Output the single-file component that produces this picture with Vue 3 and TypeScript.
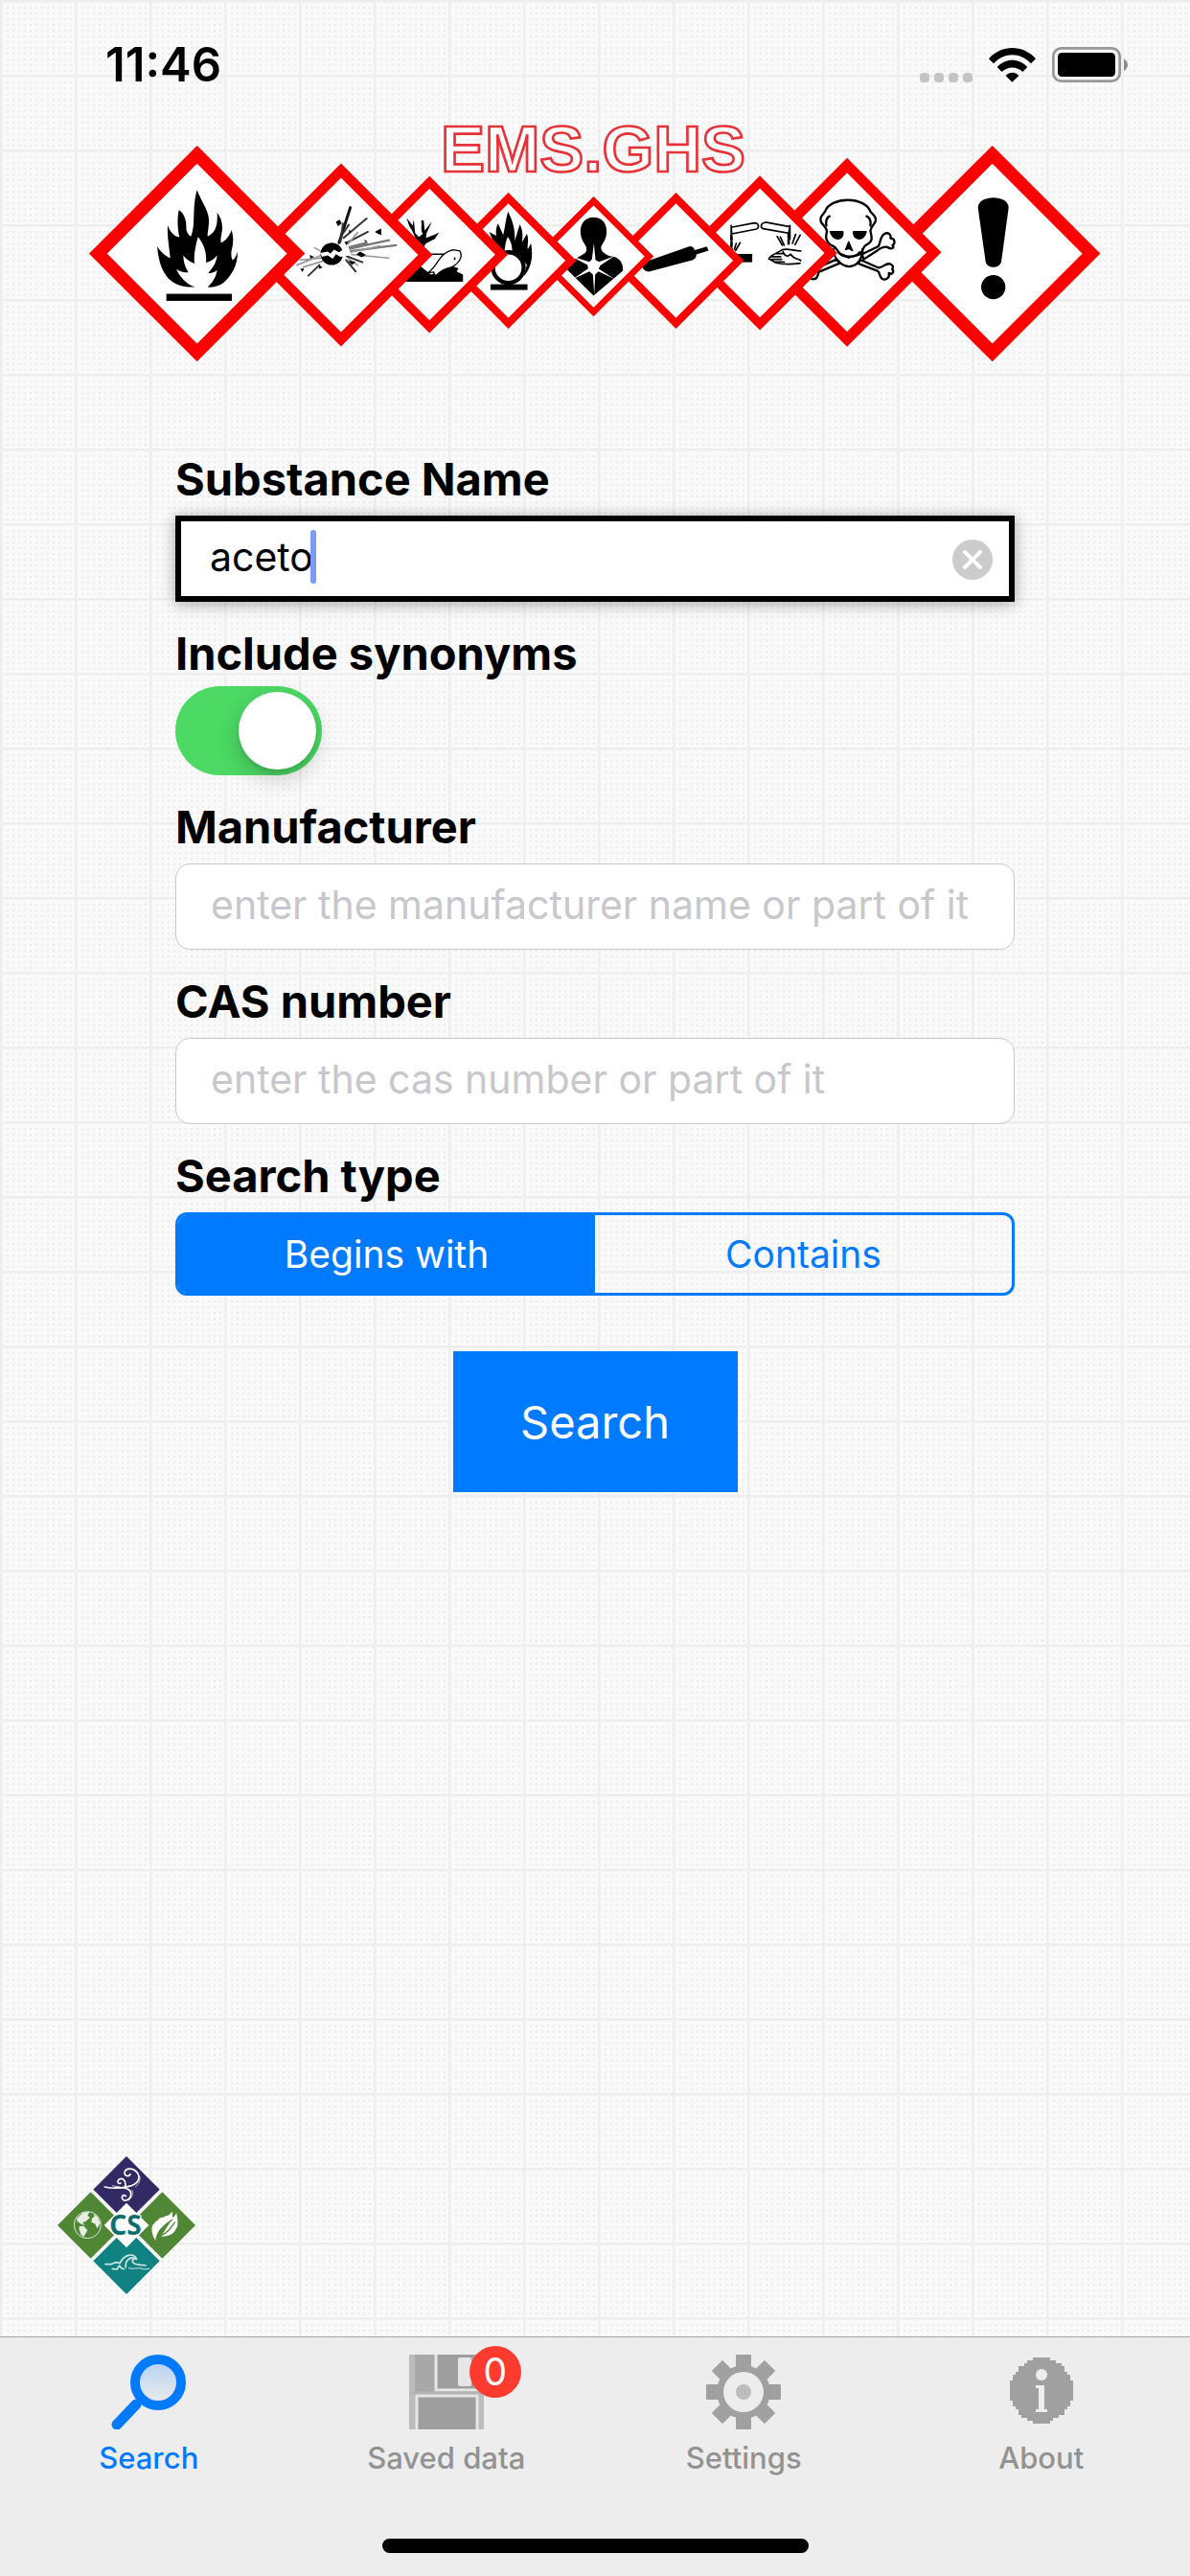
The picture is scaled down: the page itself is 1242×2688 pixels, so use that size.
<script setup lang="ts">
import { computed, ref } from 'vue'

interface Tab {
  id: string
  label: string
  badge?: number
}

const substance = ref('aceto')
const includeSynonyms = ref(true)
const manufacturer = ref('')
const casNumber = ref('')
const searchType = ref<'begins' | 'contains'>('begins')
const activeTab = ref('search')

const searchTypes = [
  { value: 'begins', label: 'Begins with' },
  { value: 'contains', label: 'Contains' },
]

const tabs = computed<Tab[]>(() => [
  { id: 'search', label: 'Search' },
  { id: 'saved', label: 'Saved data', badge: 0 },
  { id: 'settings', label: 'Settings' },
  { id: 'about', label: 'About' },
])

function diamond(cx: number, cy: number, r: number): string {
  return `M${cx} ${cy - r}L${cx + r} ${cy}L${cx} ${cy + r}L${cx - r} ${cy}Z`
}
</script>

<template>
  <div class="screen">
    <header class="status">
      <time class="clock">11:46</time>
      <div class="indicators">
        <svg width="55" height="10" viewBox="0 0 55 10" fill="#c4c4c4" aria-hidden="true">
          <rect v-for="i in 4" :key="i" :x="(i - 1) * 15" y="0" width="10" height="10" rx="4" />
        </svg>
        <svg width="49" height="36" viewBox="0 0 147 108" aria-hidden="true">
          <path d="M0 34C40-11 107-11 147 34L132 49C98 13 49 13 15 49Z" />
          <path d="M26 60C54 31 93 31 121 60L106 75C88 57 59 57 41 75Z" />
          <path d="M53 87C65 74 82 74 94 87L73 107Z" />
        </svg>
        <svg width="79" height="37" viewBox="0 0 237 111" aria-hidden="true">
          <rect x="4" y="4" width="208" height="103" rx="25" fill="none" stroke="#979797" stroke-width="8" />
          <rect x="18" y="18" width="180" height="75" rx="13" />
          <path d="M225 36Q249 56 225 76Z" fill="#8c8c8c" />
        </svg>
      </div>
    </header>

    <svg class="banner" viewBox="39 0 3168 810" role="img" aria-label="EMS.GHS hazard pictograms">
      <!-- exclamation mark -->
      <g>
        <path :d="diamond(2868, 464, 310)" class="sign" stroke-width="40" />
        <path d="M2823 320C2823 278 2919 278 2919 320L2896 490C2890 512 2852 512 2847 490Z" />
        <circle cx="2871" cy="569" r="38" />
      </g>
      <!-- skull and crossbones -->
      <g>
        <path :d="diamond(2413, 460, 272)" class="sign" stroke-width="33" />
        <g transform="translate(2100 0)" fill="#fff" stroke="#000" stroke-width="7" stroke-linejoin="round" stroke-linecap="round">
          <path d="M360 466L410 442C418 436 414 412 430 402C442 396 452 405 449 416C464 416 464 434 455 438C464 446 452 452 440 444C425 440 414 450 405 456L365 482Z" />
          <path d="M356 484L410 508C425 510 430 494 447 496C459 500 458 508 454 513C464 520 452 532 444 525C448 540 432 550 422 542C412 534 418 525 408 518L345 494Z" />
          <path d="M280 482L225 506C212 510 205 492 192 498L200 542C218 550 222 532 224 522L290 494Z" />
          <path d="M250 393C246 380 240 376 233 368C224 350 238 342 244 332C262 284 370 284 387 334C396 342 410 354 398 370C390 380 388 384 386 393C392 416 392 426 378 434C360 440 366 452 354 466L318 476L290 464C278 450 282 444 262 437C244 424 246 412 250 393Z" />
          <path d="M270 450C272 470 276 480 290 492Q318 516 346 494C358 480 362 468 362 450M286 460C300 478 340 478 352 460M258 347C248 352 246 362 248 376M374 347C386 352 388 362 386 376" fill="none" />
          <path d="M260 395H300C304 425 268 426 260 395ZM333 395H373C368 426 330 425 333 395ZM318 427L308 452L318 448L330 455Z" fill="#000" stroke-width="4" />
        </g>
      </g>
      <!-- corrosion -->
      <g>
        <path :d="diamond(2140, 462, 222)" class="sign" stroke-width="28" />
        <g transform="translate(1080 0)" fill="none" stroke="#000" stroke-width="5" stroke-linecap="round">
          <path d="M970 382L1042 368C1058 368 1060 386 1046 388L972 402ZM970 376V420M1154 380L1078 366C1062 368 1060 382 1070 386L1150 400ZM1154 376V418" />
          <path d="M971 410V458M1150 402V440" stroke-width="8" stroke-dasharray="12 7" />
          <path d="M1114 410L1130 438M1124 412L1136 438M1186 406L1170 436M1172 404L1162 432M998 430L984 454M986 432L980 450" />
          <path d="M1130 452C1148 446 1166 456 1188 456M1130 452L1094 472L1088 480L1110 493C1140 500 1160 498 1186 494M1094 474H1125M1098 482H1128M1108 490H1136M1112 464H1132M1132 458C1138 474 1150 474 1156 466M1156 466C1168 484 1180 478 1188 486" />
          <path d="M960 478H1036" stroke-width="26" stroke-linecap="butt" />
        </g>
      </g>
      <!-- gas cylinder -->
      <g>
        <path :d="diamond(1877, 486, 196)" class="sign" stroke-width="24" />
        <path d="M1770 494L1920 441C1928 440 1932 444 1936 453L1974 442L1979 455L1941 467C1942 476 1936 482 1928 485L1792 521C1776 520 1768 506 1770 494Z" />
      </g>
      <!-- health hazard -->
      <g>
        <path :d="diamond(1619, 473, 174)" class="sign" stroke-width="20" />
        <g transform="translate(1080 0)">
          <path d="M539 350C566 350 580 370 580 394C580 416 570 430 563 441C560 456 572 464 590 472C620 474 632 492 631 518L539 596L452 510L480 482L508 465C518 460 518 450 515 441C508 430 498 416 498 394C498 370 512 350 539 350Z" />
          <path d="M540 432L545 484L556 490L604 472L560 501L555 512L604 543L554 520L544 530L541 592L537 530L526 520L474 544L522 511L520 500L468 472L526 490L534 482Z" fill="#fff" />
        </g>
      </g>
      <!-- oxidiser -->
      <g>
        <path :d="diamond(1352, 486, 196)" class="sign" stroke-width="24" />
        <g transform="translate(1080 0)">
          <path d="M271 332C285 360 294 385 292 425L308 372C318 390 318 415 314 430L330 402C338 420 330 440 333 450L343 432C352 480 340 515 320 535L330 500L300 462L284 456C284 436 278 422 270 412C264 425 262 440 260 456L235 448L212 396L234 408C232 395 234 380 240 370L256 406C262 380 264 355 271 332Z" />
          <circle cx="272" cy="508" r="48" fill="#fff" stroke="#000" stroke-width="13" />
          <rect x="216" y="560" width="116" height="18" />
        </g>
      </g>
      <!-- environment -->
      <g>
        <path :d="diamond(1105, 467, 226)" class="sign" stroke-width="28" />
        <path d="M1060 440C1066 420 1056 400 1042 378L1033 352L1052 376L1056 358L1060 400L1072 412L1084 402C1076 390 1082 375 1079 360H1087L1090 392L1113 363L1096 400L1094 415L1120 405L1135 398L1122 418L1094 432L1086 445Z" />
        <path d="M1024 548L1070 498L1110 530L1140 520L1178 504L1196 510L1190 520L1210 530V552H1024Z" />
        <path d="M1100 524C1130 506 1135 460 1180 452L1200 456C1212 475 1195 498 1170 508C1150 512 1138 520 1124 534L1118 522Z" fill="#fff" stroke="#000" stroke-width="4" />
        <path d="M1090 466H1150M1184 476V484" stroke="#000" stroke-width="5" />
      </g>
      <!-- exploding bomb -->
      <g>
        <path :d="diamond(828, 468, 264)" class="sign" stroke-width="32" />
        <g fill="none" stroke-linecap="round">
          <path d="M822 430L857 320" stroke="#111" stroke-width="9" />
          <path d="M836 415L908 354M850 428L912 396M835 400L852 374M845 472L895 491M844 484L874 520M760 500L726 533M826 428L834 370" stroke="#333" stroke-width="6" />
          <path d="M845 458L1000 438M840 452L978 422M846 446L908 430" stroke="#777" stroke-width="7" />
          <path d="M850 466L978 478M848 462L950 440M770 468L690 500M770 478L700 484M768 458L745 446M770 488L710 506M850 434L880 398M850 480L880 500" stroke="#999" stroke-width="5" />
        </g>
        <circle cx="799" cy="465" r="35" />
        <path d="M764 462L785 458L795 464L806 452L822 460L850 440L860 470L826 474L812 466L802 480L786 470L768 474Z" fill="#fff" />
        <path d="M812 364L824 358L830 370L818 378ZM934 396L944 390L954 386V406L944 402ZM876 466L888 458L906 468L892 476ZM852 388L860 396L854 400ZM900 420L911 426L904 428ZM700 512L712 510L708 522ZM760 500L770 508L758 512ZM730 468L744 474L732 480ZM850 486L874 490L862 500ZM838 428L850 426L846 438Z" />
      </g>
      <!-- flame -->
      <g>
        <path :d="diamond(377, 464, 310)" class="sign" stroke-width="40" />
        <path d="M377 265C392 305 415 330 414 362C414 385 410 395 410 410C432 400 443 380 440 335C455 355 458 375 455 395C453 410 450 418 452 430C465 425 478 410 485 390C493 415 490 435 485 455C483 470 485 478 488 485C495 482 500 472 504 458C505 500 485 535 460 555C445 566 428 570 410 569C424 555 436 540 440 516C430 524 420 525 412 525C425 510 437 495 440 470C430 482 418 490 405 492C408 465 400 435 380 412C372 440 366 470 369 495C355 490 342 482 334 470C334 490 340 508 350 523C338 524 325 520 312 513C325 540 345 560 370 569C330 570 295 560 275 525C260 500 255 470 252 441C262 458 278 472 293 478C290 445 283 410 285 375C292 395 305 410 322 413C315 385 315 350 320 328C335 335 345 360 343 385C345 400 352 408 358 410C362 400 365 385 366 370C368 340 366 300 377 265Z" />
        <rect x="281" y="590" width="205" height="22" />
      </g>
      <text x="1140" y="208" class="brand">EMS.GHS</text>
    </svg>

    <form class="form" @submit.prevent>
      <div class="group">
        <label class="title" for="substance">Substance Name</label>
        <div class="field focused">
          <input id="substance" v-model="substance" class="box" type="text" autocomplete="off" spellcheck="false" />
          <span class="caret" aria-hidden="true"></span>
          <button class="clear" type="button" aria-label="Clear" @click="substance = ''">
            <svg width="42" height="42" viewBox="0 0 42 42" aria-hidden="true">
              <circle cx="21" cy="21" r="21" fill="#ccc" />
              <path d="M13 13L29 29M29 13L13 29" stroke="#fff" stroke-width="4" stroke-linecap="round" />
            </svg>
          </button>
        </div>
      </div>

      <div class="group tight">
        <label class="title" for="synonyms">Include synonyms</label>
        <input id="synonyms" v-model="includeSynonyms" class="switch" type="checkbox" role="switch" />
      </div>

      <div class="group">
        <label class="title" for="manufacturer">Manufacturer</label>
        <input id="manufacturer" v-model="manufacturer" class="box" type="text" placeholder="enter the manufacturer name or part of it" />
      </div>

      <div class="group">
        <label class="title" for="cas">CAS number</label>
        <input id="cas" v-model="casNumber" class="box" type="text" placeholder="enter the cas number or part of it" />
      </div>

      <div class="group">
        <span id="search-type" class="title">Search type</span>
        <div class="segments" role="radiogroup" aria-labelledby="search-type">
          <label v-for="t in searchTypes" :key="t.value" class="segment" :class="{ on: searchType === t.value }">
            <input v-model="searchType" class="radio" type="radio" name="search-type" :value="t.value" />
            {{ t.label }}
          </label>
        </div>
      </div>

      <button class="submit" type="submit">Search</button>
    </form>

    <svg class="logo" viewBox="90 90 432 432" role="img" aria-label="CS">
      <path d="M306 90L410 194L306 298L202 194Z" fill="#312a64" />
      <path d="M194 202L298 306L194 410L90 306Z" fill="#508735" />
      <path d="M418 202L522 306L418 410L314 306Z" fill="#508735" />
      <path d="M306 314L410 418L306 522L202 418Z" fill="#0f8281" />
      <path d="M306 236L376 306L306 376L236 306Z" fill="#fff" />
      <g fill="none" stroke="#fff" stroke-linecap="round">
        <path d="M238 186C262 192 290 190 314 184C342 178 352 158 340 142C328 124 302 126 300 142C300 152 314 156 318 146" stroke-width="5" />
        <path d="M302 184C306 168 294 156 284 162C274 168 280 178 288 174M270 188C296 186 320 190 320 208C320 228 296 236 292 220C292 210 304 210 304 216" stroke-width="5" />
        <path d="M348 154C350 166 344 178 334 186M262 182L284 186M324 196C328 210 322 222 312 228" stroke-width="2" />
      </g>
      <circle cx="184" cy="305" r="42" fill="none" stroke="#dfe8da" stroke-width="3" />
      <path d="M150 286L170 266L190 264L184 276L192 282L178 294L168 298L176 306L164 302L152 294ZM158 310L172 308L184 322L172 342L164 336L158 320ZM202 270L216 280L224 300L214 316L208 302L196 296L198 284L206 278Z" fill="#e6efe2" />
      <path d="M397 354C382 332 382 306 394 300C396 292 404 294 408 286C412 280 422 284 430 276C440 276 444 268 449 263C452 272 448 276 452 282C456 278 460 272 463 266C463 280 468 284 466 298C468 312 460 318 456 326C446 338 430 340 414 342C430 318 436 306 446 292C424 304 400 326 397 354Z" fill="#fff" />
      <path d="M399 350C402 326 424 304 450 288M412 340C434 330 444 316 458 296" fill="none" stroke="#508735" stroke-width="4" />
      <g fill="none" stroke="#cfe6e4" stroke-width="5" stroke-linejoin="round">
        <path d="M238 428H258L272 422L286 424C298 398 328 390 338 412C330 408 322 414 326 422C334 432 344 428 350 430L368 432" />
        <path d="M260 442L276 444L284 432L290 440L300 444M304 440C300 416 316 406 330 408" />
        <path d="M312 440C330 446 342 436 354 442C362 446 370 442 378 442" stroke-width="3" />
      </g>
      <text x="303" y="336" text-anchor="middle" class="monogram">CS</text>
    </svg>

    <nav class="tabbar">
      <div class="tabs">
        <button
          v-for="tab in tabs"
          :key="tab.id"
          type="button"
          class="tab"
          :class="{ active: activeTab === tab.id }"
          @click="activeTab = tab.id"
        >
          <span class="glyph">
            <svg v-if="tab.id === 'search'" width="78" height="78" viewBox="0 0 78 78" aria-hidden="true">
              <defs>
                <linearGradient id="lens" x1="0" y1="0" x2="0" y2="1">
                  <stop offset="0" stop-color="#b4d1f2" />
                  <stop offset="1" stop-color="#ededed" />
                </linearGradient>
              </defs>
              <circle cx="49" cy="29" r="24" fill="url(#lens)" stroke="#007aff" stroke-width="10" />
              <path d="M26 52L6 73" stroke="#007aff" stroke-width="11" stroke-linecap="round" />
            </svg>
            <svg v-else-if="tab.id === 'saved'" width="78" height="78" viewBox="0 0 78 78" aria-hidden="true">
              <rect width="78" height="78" fill="#bcbcbc" />
              <rect x="6" width="66" height="44" fill="#a8a8a8" />
              <path d="M28 0V37H78" fill="none" stroke="#e6e6e6" stroke-width="3" />
              <rect x="30" width="42" height="35" fill="#9e9e9e" />
              <rect x="51" y="3" width="14" height="30" rx="2" fill="#e6e6e6" />
              <path d="M0 40H78" stroke="#b4b4b4" stroke-width="3" />
              <path d="M8 78V43H71V78" fill="#9e9e9e" stroke="#e6e6e6" stroke-width="3" />
            </svg>
            <svg v-else-if="tab.id === 'settings'" width="78" height="78" viewBox="0 0 78 78" fill="#a0a0a0" aria-hidden="true">
              <rect v-for="a in [0, 45, 90, 135]" :key="a" x="31" y="0" width="16" height="78" rx="1" :transform="`rotate(${a} 39 39)`" />
              <circle cx="39" cy="39" r="28" />
              <circle cx="39" cy="39" r="21" fill="#ededed" />
              <circle cx="39" cy="39" r="8" fill="#bdbdbd" />
            </svg>
            <svg v-else width="78" height="78" viewBox="0 0 78 78" aria-hidden="true">
              <path d="M30 3H48V6H54V9H60V12H63V18H66V21H69V27H72V48H69V54H66V57H63V63H57V66H51V69H48V72H30V69H24V66H18V63H15V57H12V54H9V48H6V27H9V21H12V18H15V12H21V9H24V6H30Z" fill="#a0a0a0" />
              <circle cx="39" cy="21" r="6" fill="#ededed" />
              <path d="M33 32H42V57H45V60H33V57H36V35H33Z" fill="#ededed" />
            </svg>
            <span v-if="tab.badge !== undefined" class="badge">{{ tab.badge }}</span>
          </span>
          <span class="caption">{{ tab.label }}</span>
        </button>
      </div>
      <div class="home"></div>
    </nav>
  </div>
</template>

<style>
body {
  margin: 0;
}
</style>

<style scoped>
.screen {
  display: flex;
  flex-direction: column;
  min-height: 100vh;
  font-family: Inter, "Liberation Sans", sans-serif;
  color: #000;
  background-color: #fafafa;
  background-image:
    linear-gradient(90deg, #eeeeee 0 2px, #f3f3f3 2px 3px, transparent 3px),
    linear-gradient(#eeeeee 0 2px, #f3f3f3 2px 3px, transparent 3px),
    radial-gradient(circle at 50% 50%, #e8e8e8 0, #fafafa00 2px);
  background-size: 78px 78px, 78px 78px, 6px 6px;
  background-position: 0 0, 0 0, -1px -1px;
}

.status {
  display: flex;
  justify-content: space-between;
  box-sizing: border-box;
  height: 110px;
  padding: 38px 65px 0 110px;
}

.clock {
  font-size: 49px;
  line-height: 60px;
  font-weight: 600;
}

.indicators {
  display: flex;
  align-items: flex-end;
  gap: 17px;
  height: 48px;
}

.banner {
  display: block;
  width: 85%;
  margin: 0 auto;
}

.sign {
  fill: #fff;
  stroke: #f00;
  stroke-miterlimit: 10;
}

.brand {
  font-family: "Liberation Sans", sans-serif;
  font-weight: 700;
  font-size: 207px;
  fill: #fff;
  stroke: #e73338;
  stroke-width: 8px;
}

.form {
  display: flex;
  flex-direction: column;
  gap: 26px;
  margin: 92px 183px 0;
}

.group {
  display: flex;
  flex-direction: column;
  gap: 10px;
}

.tight {
  gap: 6px;
}

.title {
  font-size: 47px;
  line-height: 56px;
  font-weight: 700;
}

.field {
  position: relative;
}

.box {
  box-sizing: border-box;
  width: 100%;
  height: 90px;
  margin: 0;
  padding: 0 30px 4px 36px;
  border: 1px solid #c9c9cb;
  border-radius: 15px;
  background: #fff;
  color: #000;
  font-family: inherit;
  font-size: 41px;
  outline: none;
}

.box::placeholder {
  color: #c7c7cc;
  opacity: 1;
}

.focused .box {
  display: block;
  padding: 0 80px 4px 30px;
  border: 6px solid #000;
  border-radius: 0;
  box-shadow: 0 2px 15px rgba(0, 0, 0, 0.35);
}

.caret {
  position: absolute;
  top: 15px;
  left: 141px;
  width: 6px;
  height: 56px;
  border-radius: 3px;
  background: #7b9bf8;
}

.clear {
  position: absolute;
  top: 25px;
  right: 23px;
  width: 42px;
  height: 42px;
  padding: 0;
  border: 0;
  background: none;
}

.clear svg {
  display: block;
}

.switch {
  appearance: none;
  box-sizing: border-box;
  width: 153px;
  height: 93px;
  margin: 0;
  padding: 6px;
  border-radius: 47px;
  background: #d8d8d8;
  display: flex;
}

.switch::before {
  content: "";
  width: 81px;
  height: 81px;
  border-radius: 50%;
  background: #fff;
  box-shadow: 0 9px 24px rgba(0, 0, 0, 0.2), 0 4px 4px rgba(0, 0, 0, 0.08);
}

.switch:checked {
  justify-content: flex-end;
  background: #4cd964;
}

.segments {
  display: flex;
  box-sizing: border-box;
  height: 87px;
  border: 3px solid #007aff;
  border-radius: 12px;
  overflow: hidden;
}

.segment {
  flex: 1;
  display: flex;
  align-items: center;
  justify-content: center;
  font-size: 39px;
  color: #007aff;
}

.segment.on {
  background: #007aff;
  color: #fff;
}

.radio {
  position: absolute;
  appearance: none;
  margin: 0;
  opacity: 0;
}

.submit {
  align-self: center;
  width: 297px;
  height: 147px;
  margin: 32px 0 0;
  padding: 0;
  border: 0;
  background: #007aff;
  color: #fff;
  font-family: inherit;
  font-size: 47px;
}

.logo {
  width: 144px;
  height: 144px;
  margin: auto 0 44px 60px;
}

.monogram {
  font-family: "Noto Sans", sans-serif;
  font-weight: 700;
  font-size: 84px;
  fill: #0c6f6b;
  stroke: #fff;
  stroke-width: 6px;
  paint-order: stroke;
}

.tabbar {
  display: flex;
  flex-direction: column;
  justify-content: space-between;
  box-sizing: border-box;
  height: 250px;
  padding-bottom: 24px;
  border-top: 1px solid #a6a6a6;
  background: #ededed;
}

.tabs {
  display: flex;
}

.tab {
  flex: 1 0 0;
  display: flex;
  flex-direction: column;
  align-items: center;
  gap: 12px;
  padding: 18px 0 0;
  border: 0;
  background: none;
  color: #929292;
  font-family: inherit;
  font-size: 31px;
  line-height: 36px;
  font-weight: 500;
}

.tab.active {
  color: #007aff;
}

.glyph {
  position: relative;
  width: 78px;
  height: 78px;
}

.glyph svg {
  display: block;
}

.badge {
  position: absolute;
  top: -9px;
  left: 63px;
  width: 54px;
  height: 54px;
  border-radius: 50%;
  background: #ff3b30;
  color: #fff;
  font-size: 39px;
  line-height: 54px;
  font-weight: 400;
  text-align: center;
}

.home {
  align-self: center;
  width: 445px;
  height: 15px;
  border-radius: 8px;
  background: #000;
}
</style>
